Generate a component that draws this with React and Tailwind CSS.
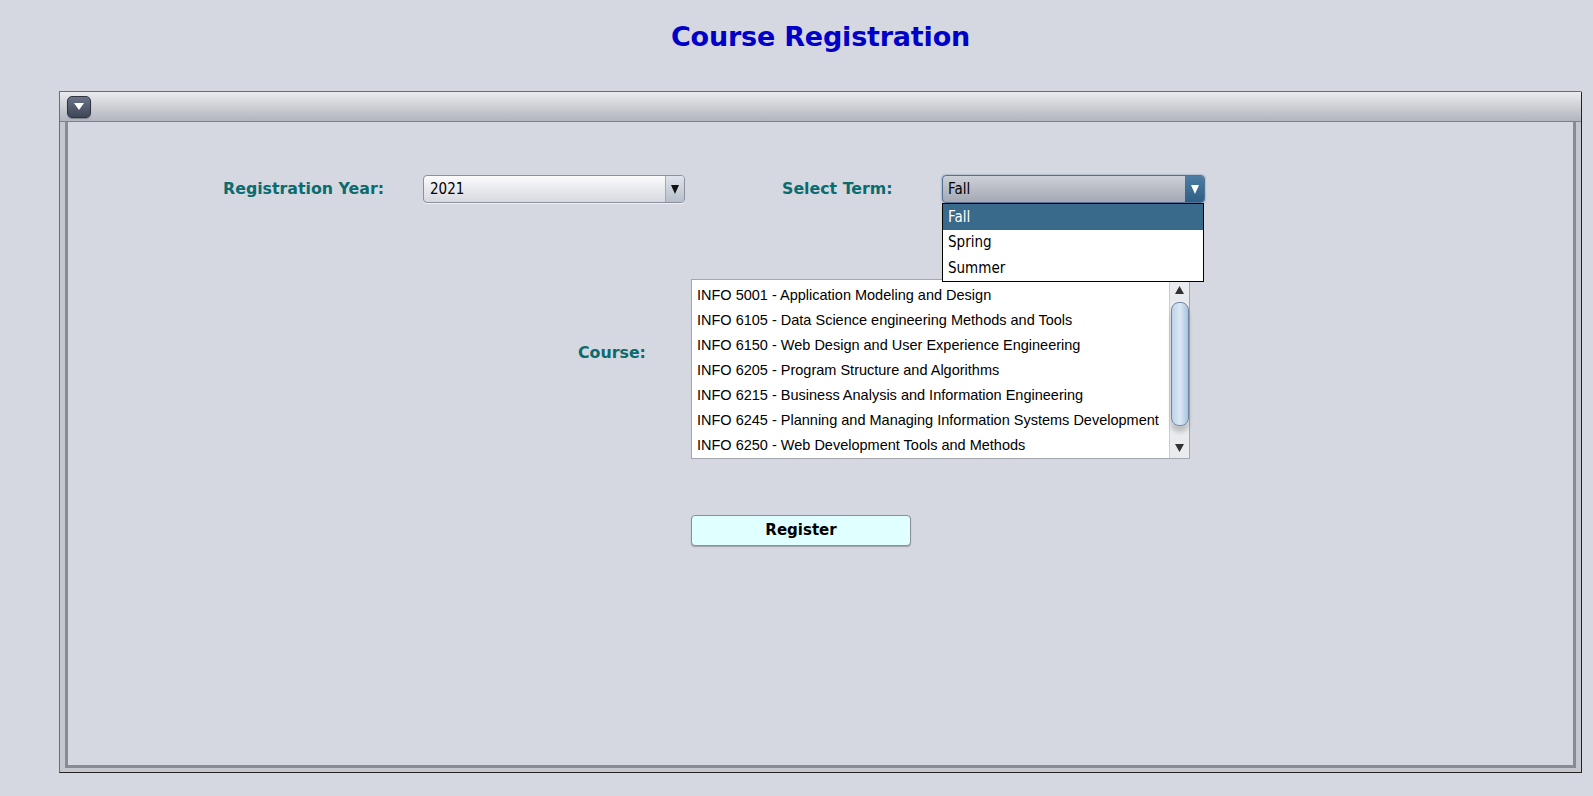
import React from 'react';

const courses = [
  'INFO 5001 - Application Modeling and Design',
  'INFO 6105 - Data Science engineering Methods and Tools',
  'INFO 6150 - Web Design and User Experience Engineering',
  'INFO 6205 - Program Structure and Algorithms',
  'INFO 6215 - Business Analysis and Information Engineering',
  'INFO 6245 - Planning and Managing Information Systems Development',
  'INFO 6250 - Web Development Tools and Methods',
];

const condensed = { fontFamily: '"DejaVu Sans Condensed", "DejaVu Sans", sans-serif' };
const wide = { fontFamily: '"DejaVu Sans", "Liberation Sans", sans-serif' };

function Label({ children, className = '' }) {
  return (
    <span className={`text-[15.8px] font-bold text-[#0b6b6e] ${className}`} style={wide}>
      {children}
    </span>
  );
}

export default function App() {
  return (
    <div className="w-[1593px] h-[796px] bg-[#d5d8e0] flex flex-col overflow-hidden">
      {/* Titel */}
      <div className="h-[91px] flex justify-center pt-[17px] pl-[48px]">
        <h1 className="text-[27px] font-bold text-[#0000c8] tracking-[-0.2px]" style={wide}>
          Course Registration
        </h1>
      </div>

      {/* Panel */}
      <div className="flex-1 ml-[59px] mr-[11px] mb-[23px] flex flex-col border-l border-t border-[#6a6e76] border-r border-b border-r-[#222] border-b-[#222] rounded-tr-[2px]">
        {/* Titelleiste */}
        <div className="h-[30px] bg-gradient-to-b from-[#eaebee] to-[#b1b5be] border-b border-[#7d818a] flex items-center pl-[7px]">
          <button className="w-[24px] h-[22px] rounded-[5px] bg-gradient-to-b from-[#6b7487] to-[#3e4657] border border-[#2e3442] flex items-center justify-center shadow-[0_1px_1px_rgba(0,0,0,0.3)]">
            <svg width="10" height="7" viewBox="0 0 10 7">
              <polygon points="0,0 10,0 5,7" fill="#fff" />
            </svg>
          </button>
        </div>

        {/* Inhalt */}
        <div className="flex-1 flex bg-[#c4c7ce] pl-[5px] pr-[5px] pb-[4px]">
          <div className="flex-1 bg-[#d5d8e0] border-l-[3px] border-r-[3px] border-b-[3px] border-[#868b94] relative flex flex-col">
            {/* Zeile 1 */}
            <div className="flex items-center mt-[53px] h-[28px]">
              <Label className="ml-[155px] w-[200px]">Registration Year:</Label>
              <div className="w-[262px] h-[28px] rounded-[4px] border border-[#8b9099] bg-gradient-to-b from-[#fbfbfc] to-[#d6d9e0] flex items-stretch overflow-hidden shadow-[0_1px_0_rgba(255,255,255,0.6)]">
                <span className="flex-1 flex items-center pl-[6px] text-[15px] text-black" style={condensed}>2021</span>
                <span className="w-[19px] border-l border-[#a4a9b2] bg-gradient-to-b from-[#dfe4ec] to-[#b6bfcc] flex items-center justify-center">
                  <svg width="8" height="9" viewBox="0 0 8 9">
                    <polygon points="0,0 8,0 4,9" fill="#111" />
                  </svg>
                </span>
              </div>
              <Label className="ml-[97px] w-[160px]">Select Term:</Label>
              <div className="relative">
                <div className="w-[263px] h-[28px] rounded-[4px] border border-[#4f7397] bg-gradient-to-b from-[#cdd0d7] to-[#a3a8b3] flex items-stretch overflow-hidden shadow-[0_0_2px_rgba(60,100,150,0.7)]">
                  <span className="flex-1 flex items-center pl-[5px] text-[15px] text-black" style={condensed}>Fall</span>
                  <span className="w-[19px] bg-gradient-to-b from-[#4e7da3] to-[#2f5f85] flex items-center justify-center">
                    <svg width="8" height="9" viewBox="0 0 8 9">
                      <polygon points="0,0 8,0 4,9" fill="#fff" />
                    </svg>
                  </span>
                </div>
                {/* Aufgeklapptes Menü */}
                <ul className="absolute left-0 top-[28px] w-[262px] bg-white border border-black z-10 text-[15px]" style={condensed}>
                  <li className="h-[26px] bg-[#396a8c] text-white flex items-center pl-[5px]">Fall</li>
                  <li className="h-[25px] text-black flex items-center pl-[5px]">Spring</li>
                  <li className="h-[26px] text-black flex items-center pl-[5px]">Summer</li>
                </ul>
              </div>
            </div>

            {/* Zeile 2 */}
            <div className="flex mt-[76px]">
              <Label className="ml-[510px] mt-[62px] w-[113px]">Course:</Label>
              <div className="w-[499px] h-[180px] bg-white border border-[#a3a7ae] flex">
                <ul className="flex-1 pt-[3px]" style={{ fontFamily: '"Liberation Sans", Arial, sans-serif' }}>
                  {courses.map((c) => (
                    <li key={c} className="h-[25px] flex items-center pl-[5px] text-[14.5px] text-black whitespace-nowrap">
                      {c}
                    </li>
                  ))}
                </ul>
                <div className="w-[20px] bg-[#e9ebee] border-l border-[#c9ccd2] flex flex-col items-center">
                  <div className="h-[20px] flex items-center justify-center">
                    <svg width="9" height="8" viewBox="0 0 9 8">
                      <polygon points="0,8 9,8 4.5,0" fill="#333" />
                    </svg>
                  </div>
                  <div className="w-[18px] h-[124px] mt-[2px] rounded-[8px] border border-[#6f86a0] bg-gradient-to-r from-[#bcd2e8] via-[#dce9f5] to-[#a9c3de] shadow-[0_6px_4px_rgba(0,0,0,0.18)]" />
                  <div className="flex-1" />
                  <div className="h-[20px] flex items-center justify-center">
                    <svg width="9" height="8" viewBox="0 0 9 8">
                      <polygon points="0,0 9,0 4.5,8" fill="#333" />
                    </svg>
                  </div>
                </div>
              </div>
            </div>

            {/* Zeile 3 */}
            <div className="flex mt-[56px]">
              <button
                className="ml-[623px] w-[220px] h-[31px] rounded-[4px] border border-[#8a8f98] bg-[#e0ffff] text-[15px] font-bold text-black shadow-[0_1px_1px_rgba(0,0,0,0.25)]"
                style={wide}
              >
                Register
              </button>
            </div>
          </div>
        </div>
      </div>
    </div>
  );
}
